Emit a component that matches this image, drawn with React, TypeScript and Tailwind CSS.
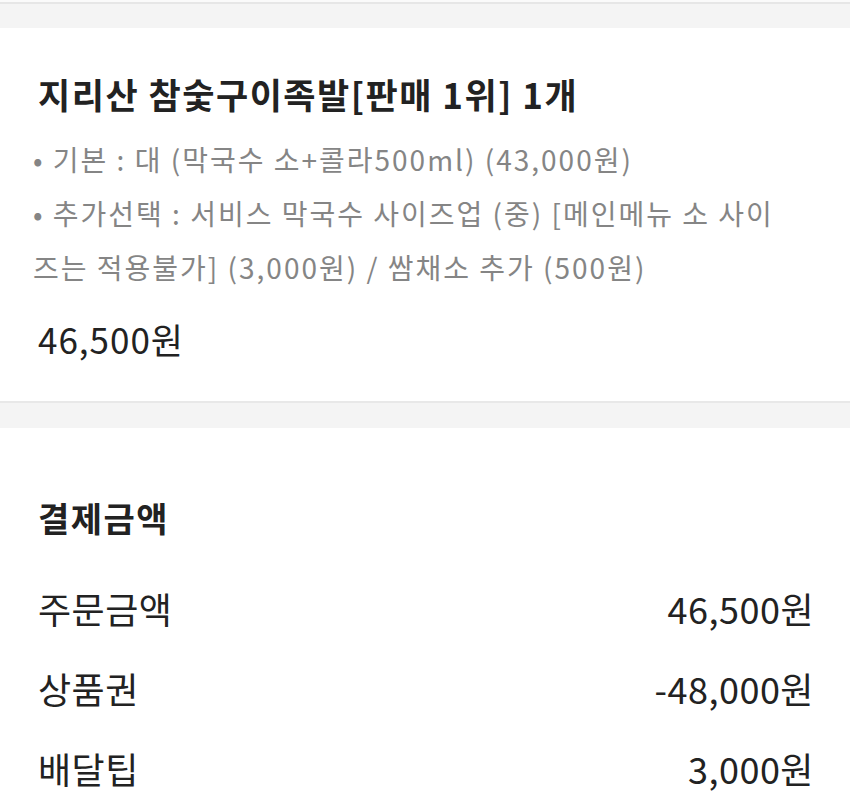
import React from "react";

const options = [
  "• 기본 : 대 (막국수 소+콜라500ml) (43,000원)",
  "• 추가선택 : 서비스 막국수 사이즈업 (중) [메인메뉴 소 사이즈는 적용불가] (3,000원) / 쌈채소 추가 (500원)",
];

const payments = [
  { label: "주문금액", value: "46,500원" },
  { label: "상품권", value: "-48,000원" },
  { label: "배달팁", value: "3,000원" },
];

const Divider = () => (
  <div className="h-[27px] bg-[#f4f4f4] border-t-[2px] border-[#e8e8e8]" />
);

export default function App() {
  return (
    <div
      className="min-h-screen bg-white text-[#222]"
      style={{ fontFamily: '"Noto Sans CJK KR", "Noto Sans", sans-serif' }}
    >
      <div className="h-[2px] bg-[#fafafa]" />
      <div className="h-[26px] bg-[#f4f4f4] border-t-[2px] border-[#e6e6e6]" />

      {/* 주문 메뉴 */}
      <section className="px-[38px] pt-[46px] pb-[40px]">
        <h2 className="text-[35px] leading-[40px] font-bold tracking-[1.5px]">
          지리산 참숯구이족발[판매 1위] 1개
        </h2>
        <div className="mt-[18px] -ml-[5px] mr-[17px]">
          {options.map((opt, i) => (
            <p key={i} className="text-[28px] leading-[54px] text-[#858585] tracking-[2px]">
              {opt}
            </p>
          ))}
        </div>
        <p className="mt-[23px] text-[35px] leading-[44px] tracking-[1px]">46,500원</p>
      </section>

      <Divider />

      {/* 결제금액 */}
      <section className="pl-[38px] pr-[36px] pt-[70px]">
        <h2 className="text-[34px] leading-[40px] font-bold tracking-[1.5px]">결제금액</h2>
        <div className="mt-[30px]">
          {payments.map((p) => (
            <div
              key={p.label}
              className="flex items-center justify-between h-[80px] text-[36px] tracking-[0.5px]"
            >
              <span>{p.label}</span>
              <span>{p.value}</span>
            </div>
          ))}
        </div>
      </section>
    </div>
  );
}
